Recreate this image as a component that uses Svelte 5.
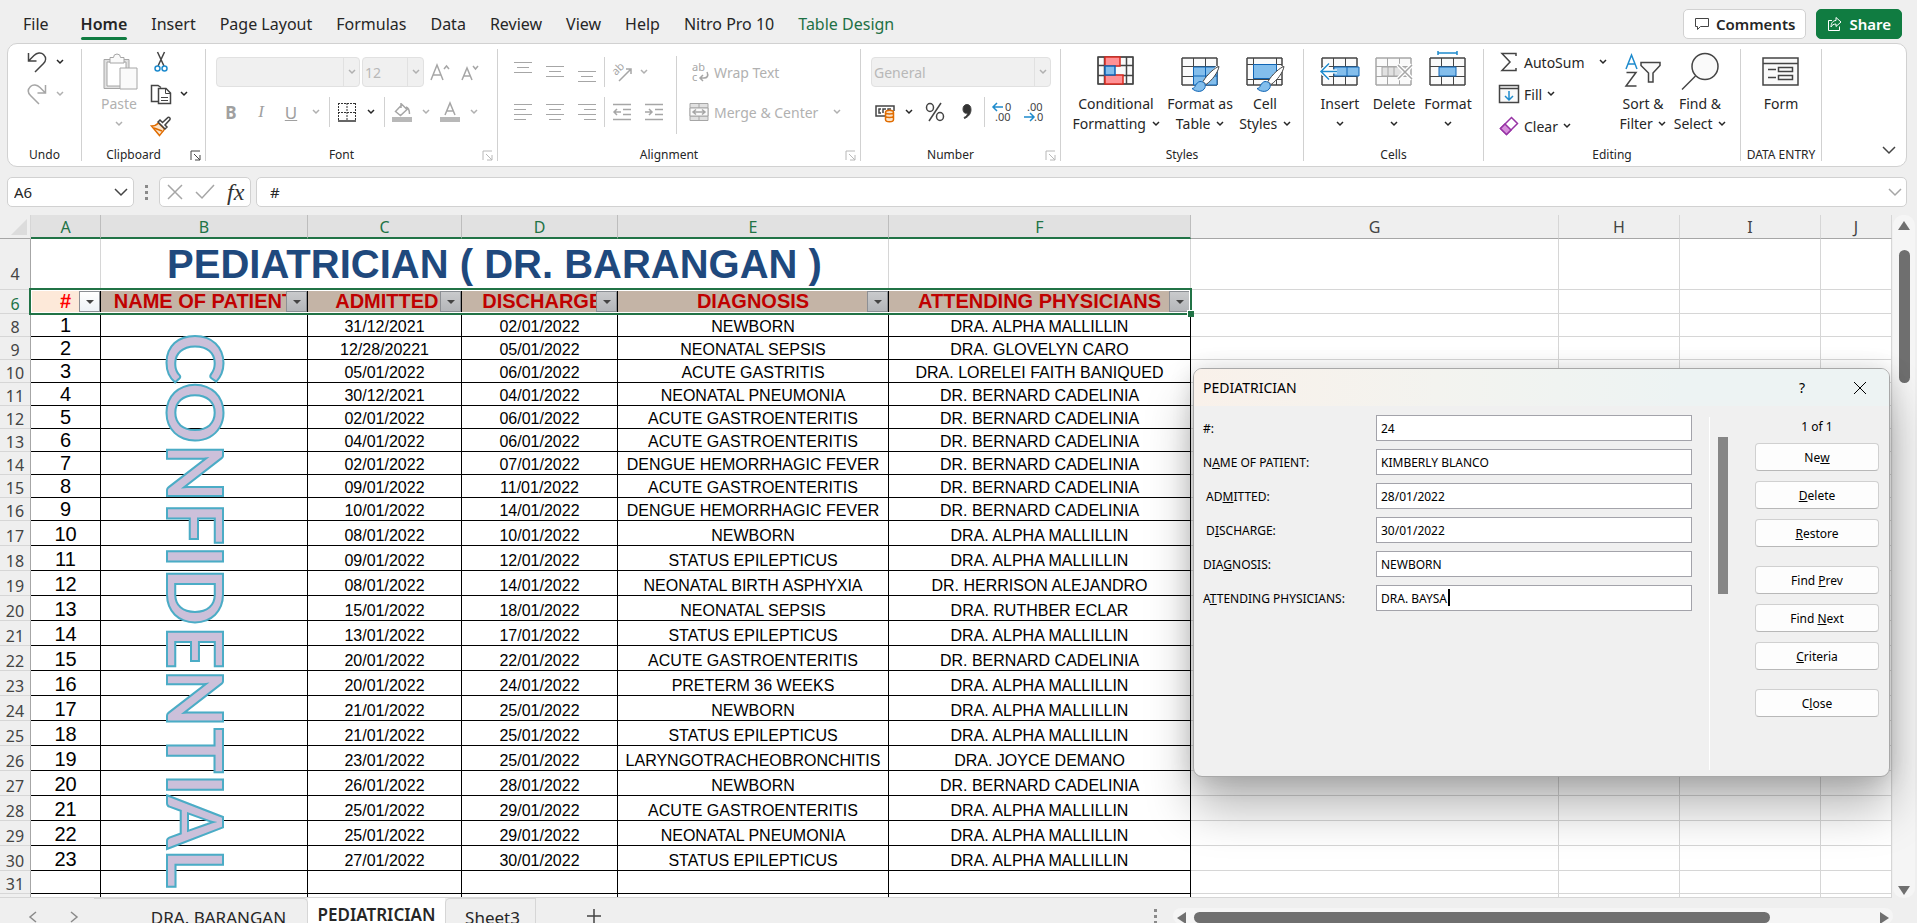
<script>
    const tabs = ['File', 'Home', 'Insert', 'Page Layout', 'Formulas', 'Data', 'Review', 'View', 'Help', 'Nitro Pro 10', 'Table Design']
    let activeTab = $state('Home')

    const columns = ['A', 'B', 'C', 'D', 'E', 'F', 'G', 'H', 'I', 'J']
    const headings = ['#', 'NAME OF PATIENT', ' ADMITTED', ' DISCHARGE', 'DIAGNOSIS', 'ATTENDING PHYSICIANS']

    const patients = [
        ['31/12/2021', '02/01/2022', 'NEWBORN', 'DRA. ALPHA MALLILLIN'],
        ['12/28/20221', '05/01/2022', 'NEONATAL SEPSIS', 'DRA. GLOVELYN CARO'],
        ['05/01/2022', '06/01/2022', 'ACUTE GASTRITIS', 'DRA. LORELEI FAITH BANIQUED'],
        ['30/12/2021', '04/01/2022', 'NEONATAL PNEUMONIA', 'DR. BERNARD CADELINIA'],
        ['02/01/2022', '06/01/2022', 'ACUTE GASTROENTERITIS', 'DR. BERNARD CADELINIA'],
        ['04/01/2022', '06/01/2022', 'ACUTE GASTROENTERITIS', 'DR. BERNARD CADELINIA'],
        ['02/01/2022', '07/01/2022', 'DENGUE HEMORRHAGIC FEVER', 'DR. BERNARD CADELINIA'],
        ['09/01/2022', '11/01/2022', 'ACUTE GASTROENTERITIS', 'DR. BERNARD CADELINIA'],
        ['10/01/2022', '14/01/2022', 'DENGUE HEMORRHAGIC FEVER', 'DR. BERNARD CADELINIA'],
        ['08/01/2022', '10/01/2022', 'NEWBORN', 'DRA. ALPHA MALLILLIN'],
        ['09/01/2022', '12/01/2022', 'STATUS EPILEPTICUS', 'DRA. ALPHA MALLILLIN'],
        ['08/01/2022', '14/01/2022', 'NEONATAL BIRTH ASPHYXIA', 'DR. HERRISON ALEJANDRO'],
        ['15/01/2022', '18/01/2022', 'NEONATAL SEPSIS', 'DRA. RUTHBER ECLAR'],
        ['13/01/2022', '17/01/2022', 'STATUS EPILEPTICUS', 'DRA. ALPHA MALLILLIN'],
        ['20/01/2022', '22/01/2022', 'ACUTE GASTROENTERITIS', 'DR. BERNARD CADELINIA'],
        ['20/01/2022', '24/01/2022', 'PRETERM 36 WEEKS', 'DRA. ALPHA MALLILLIN'],
        ['21/01/2022', '25/01/2022', 'NEWBORN', 'DRA. ALPHA MALLILLIN'],
        ['21/01/2022', '25/01/2022', 'STATUS EPILEPTICUS', 'DRA. ALPHA MALLILLIN'],
        ['23/01/2022', '25/01/2022', 'LARYNGOTRACHEOBRONCHITIS', 'DRA. JOYCE DEMANO'],
        ['26/01/2022', '28/01/2022', 'NEWBORN', 'DR. BERNARD CADELINIA'],
        ['25/01/2022', '29/01/2022', 'ACUTE GASTROENTERITIS', 'DRA. ALPHA MALLILLIN'],
        ['25/01/2022', '29/01/2022', 'NEONATAL PNEUMONIA', 'DRA. ALPHA MALLILLIN'],
        ['27/01/2022', '30/01/2022', 'STATUS EPILEPTICUS', 'DRA. ALPHA MALLILLIN'],
    ]

    // label is split around its access key
    let fields = $state([
        { id: 'num', label: ['#:', '', ''], value: '24' },
        { id: 'name', label: ['N', 'A', 'ME OF PATIENT:'], value: 'KIMBERLY BLANCO' },
        { id: 'admitted', label: [' AD', 'M', 'ITTED:'], value: '28/01/2022' },
        { id: 'discharge', label: [' D', 'I', 'SCHARGE:'], value: '30/01/2022' },
        { id: 'diagnosis', label: ['DIA', 'G', 'NOSIS:'], value: 'NEWBORN' },
        { id: 'physician', label: ['A', 'T', 'TENDING PHYSICIANS:'], value: 'DRA. BAYSA' },
    ])

    const actions = [
        [['Ne', 'w', ''], ['', 'D', 'elete'], ['', 'R', 'estore']],
        [['Find ', 'P', 'rev'], ['Find ', 'N', 'ext'], ['', 'C', 'riteria']],
        [['C', 'l', 'ose']],
    ]
</script>

{#snippet chevron()}
    <svg class="chev" width="8" height="6" viewBox="0 0 8 6"><path d="M1 1l3 3 3-3" /></svg>
{/snippet}

{#snippet launcher(off)}
    <button class="launcher" class:off aria-label="More options">
        <svg width="11" height="11" viewBox="0 0 11 11"><path d="M1 10V1h9M4 4l6 6M10 5v5H5" /></svg>
    </button>
{/snippet}

{#snippet lines(rows, y, step)}
    <svg width="20" height="20" viewBox="0 0 20 20">
        {#each rows as [x, w], i}
            <path d="M{x} {y + i * step + 0.5}h{w}" />
        {/each}
    </svg>
{/snippet}

{#snippet cellGrid()}
    <path class="cellbg" d="M2 7h35v27H2z" />
    <path d="M2 7h35v27H2zM2 15.500h35M2 25.500h35M13.500 7v27M25.500 7v27" />
{/snippet}

{#snippet brush()}
    <path class="halo" d="M38 16L24 32L14 38" />
    <path class="white" d="M39 15.500c-4 1-12 8-16 15l3 3c6-4 12-12 13-18z" />
    <path class="sky" d="M12 37.500c4 0 3-6 8-7c4 0 6 3 5 6c-2 5-9 5-13 1z" />
{/snippet}

<div class="app">
    <header class="tabbar">
        <nav>
            {#each tabs as tab}
                <button class="tab" class:active={tab === activeTab} class:context={tab === 'Table Design'} onclick={() => activeTab = tab}>{tab}</button>
            {/each}
        </nav>
        <button class="comments">
            <svg width="16" height="16" viewBox="0 0 16 16"><path d="M1.500 2.500h13v8h-8l-3 3v-3h-2z" /></svg>
            Comments
        </button>
        <button class="share">
            <svg width="16" height="16" viewBox="0 0 16 16"><path d="M5 4.500H1.500v10h11v-4M9 1.500l5 4.500-5 4.500V8C6.500 8 5 9 4 11c0-4 2-6.500 5-6.500z" /></svg>
            Share
        </button>
    </header>

    <section class="ribbon">
        <div class="group undo">
            <div class="body stack">
                <div class="row">
                    <button aria-label="Undo"><svg width="22" height="22" viewBox="0 0 22 22"><path class="thick" d="M2.500 2v8h8M2.500 10L8 4.500C11 1.500 15 1 17.500 3.500c3 3 2.500 6.500 0 9L9 21" /></svg></button>
                    <button class="drop" aria-label="Undo list">{@render chevron()}</button>
                </div>
                <div class="row off">
                    <button aria-label="Redo"><svg width="22" height="22" viewBox="0 0 22 22"><path class="thick" d="M19.500 2v8h-8M19.500 10L14 4.500C11 1.500 7 1 4.500 3.500c-3 3-2.500 6.500 0 9L13 21" /></svg></button>
                    <button class="drop" aria-label="Redo list">{@render chevron()}</button>
                </div>
            </div>
            <div class="caption">Undo</div>
        </div>

        <div class="group clipboard">
            <div class="body">
                <button class="big off">
                    <svg width="40" height="42" viewBox="0 0 40 42">
                        <path class="pad" d="M5 8.500h25v29H5z" />
                        <path class="white" d="M8 11h19v24H8z" />
                        <path class="cellbg" d="M11 12V6.500h3.500a3.500 3.500 0 017 0H25V12z" />
                        <path class="cellbg" d="M21 17h17v21H21z" />
                    </svg>
                    <span>Paste</span>
                    {@render chevron()}
                </button>
                <div class="stack">
                    <div class="row">
                        <button aria-label="Cut"><svg width="22" height="22" viewBox="0 0 22 22"><path class="thick" d="M7.500 1l6.500 14M14.500 1L8 15" /><circle class="blue thick" cx="7.500" cy="17.500" r="2.500" /><circle class="blue thick" cx="14.500" cy="17.500" r="2.500" /></svg></button>
                    </div>
                    <div class="row">
                        <button aria-label="Copy"><svg width="22" height="22" viewBox="0 0 22 22"><path class="thick" d="M8 18.500H1.500v-16H8l3 2" /><path class="white thick" d="M8.500 5.500H16l4.500 4.500v10.500h-12z" /><path d="M15.500 5.500v5h5M11 14.500h7M11 17.500h7" /></svg></button>
                        <button class="drop" aria-label="Copy list">{@render chevron()}</button>
                    </div>
                    <div class="row">
                        <button aria-label="Format Painter"><svg width="22" height="22" viewBox="0 0 22 22"><path class="orange thick" d="M1.500 11c3 0 5-1 7-3l6 6c-1 2-3 4-5 6.500z" /><path class="orange thick" d="M4 13l8 3" /><path class="thick white" d="M8 7l2-2 2.500 2.500L18 2.500a1.500 1.500 0 012 2L15 10l2 2-2 2z" /></svg></button>
                    </div>
                </div>
            </div>
            <div class="caption">Clipboard</div>
            {@render launcher(false)}
        </div>

        <div class="group font off">
            <div class="body two">
                <div class="row">
                    <div class="combo fontname"><select disabled aria-label="Font"><option></option></select><i>{@render chevron()}</i></div>
                    <div class="combo fontsize"><select disabled aria-label="Font size"><option>12</option></select><i>{@render chevron()}</i></div>
                    <button class="tool" aria-label="Increase font size"><svg width="22" height="20" viewBox="0 0 22 20"><path class="thick" d="M2 18L8 3l6 15M4 13h8" /><path class="thick" d="M15 7l2.500-3L20 7" /></svg></button>
                    <button class="tool" aria-label="Decrease font size"><svg width="22" height="20" viewBox="0 0 22 20"><path class="thick" d="M3 18L8 6l5 12M5 14h6" /><path class="thick" d="M14 4l2.500 3L19 4" /></svg></button>
                </div>
                <div class="row">
                    <button class="tool letter"><b>B</b></button>
                    <button class="tool letter"><em>I</em></button>
                    <button class="tool letter"><u>U</u></button>
                    <button class="drop" aria-label="Underline list">{@render chevron()}</button>
                    <span class="rule"></span>
                    <button class="tool on" aria-label="Borders"><svg width="20" height="20" viewBox="0 0 20 20"><path class="dots" d="M1 1.500h18M1 10.500h18M1.500 1v17M10 1v17M18.500 1v17" /><path class="thick" d="M1 19h18" /></svg></button>
                    <button class="drop on" aria-label="Borders list">{@render chevron()}</button>
                    <span class="rule"></span>
                    <button class="tool" aria-label="Fill color"><svg width="20" height="20" viewBox="0 0 20 20"><path class="thick" d="M9 1v5M3.500 9.500L10 2.500l5 5-6.500 6zM14 5c3 1 3.500 4 3.500 7" /><path class="bar" d="M0 15h20v5H0z" /></svg></button>
                    <button class="drop" aria-label="Fill color list">{@render chevron()}</button>
                    <button class="tool" aria-label="Font color"><svg width="20" height="20" viewBox="0 0 20 20"><path class="thick" d="M5 13L10 1l5 12M7 9h6" /><path class="bar" d="M0 15h20v5H0z" /></svg></button>
                    <button class="drop" aria-label="Font color list">{@render chevron()}</button>
                </div>
            </div>
            <div class="caption">Font</div>
            {@render launcher(true)}
        </div>

        <div class="group alignment off">
            <div class="body">
                <div class="two left">
                    <div class="row">
                        <button class="tool" aria-label="Top align">{@render lines([[1, 18], [4, 12], [1, 18]], 0, 5)}</button>
                        <button class="tool" aria-label="Middle align">{@render lines([[1, 18], [4, 12], [1, 18]], 4, 5)}</button>
                        <button class="tool" aria-label="Bottom align">{@render lines([[1, 18], [4, 12], [1, 18]], 9, 5)}</button>
                        <span class="rule"></span>
                        <button class="tool" aria-label="Orientation"><svg width="20" height="20" viewBox="0 0 20 20"><path class="thick" d="M7 19L19 7M14 7h5v5" /><text transform="translate(4 14) rotate(-45)">ab</text></svg></button>
                        <button class="drop slim" aria-label="Orientation list">{@render chevron()}</button>
                    </div>
                    <div class="row">
                        <button class="tool" aria-label="Align left">{@render lines([[1, 18], [1, 12], [1, 18], [1, 12]], 2, 5)}</button>
                        <button class="tool" aria-label="Center">{@render lines([[1, 18], [4, 12], [1, 18], [4, 12]], 2, 5)}</button>
                        <button class="tool" aria-label="Align right">{@render lines([[1, 18], [7, 12], [1, 18], [7, 12]], 2, 5)}</button>
                        <span class="rule"></span>
                        <button class="tool" aria-label="Decrease indent"><svg width="20" height="20" viewBox="0 0 20 20"><path class="thick" d="M1 2.500h18M11 7.500h8M11 12.500h8M1 17.500h18M9 10H2M5 7l-3 3 3 3" /></svg></button>
                        <button class="tool" aria-label="Increase indent"><svg width="20" height="20" viewBox="0 0 20 20"><path class="thick" d="M1 2.500h18M11 7.500h8M11 12.500h8M1 17.500h18M1 10h7M5 7l3 3-3 3" /></svg></button>
                    </div>
                </div>
                <span class="rule tall"></span>
                <div class="two right">
                    <button class="row wide">
                        <svg width="20" height="20" viewBox="0 0 20 20"><text x="3" y="9">ab</text><text x="3" y="19">c</text><path class="thick" d="M18 10c2 4 0 6-3 6h-4M14 13l-3 3 3 3" /></svg>
                        Wrap Text
                    </button>
                    <button class="row wide">
                        <svg width="20" height="20" viewBox="0 0 20 20"><path class="pad" d="M1 1.500h18v17H1zM1 6h18M1 14h18M10 1v5M10 14v5" /><path class="cellbg" d="M1 6h18v8H1z" /><path class="thick" d="M4 10h12M7 7.500L4 10l3 2.500M13 7.500l3 2.500-3 2.500" /></svg>
                        Merge &amp; Center
                        <span class="drop">{@render chevron()}</span>
                    </button>
                </div>
            </div>
            <div class="caption">Alignment</div>
            {@render launcher(true)}
        </div>

        <div class="group number">
            <div class="body two">
                <div class="row off">
                    <div class="combo format"><select disabled aria-label="Number format"><option>General</option></select><i>{@render chevron()}</i></div>
                </div>
                <div class="row">
                    <button class="tool money" aria-label="Accounting format"><svg width="20" height="20" viewBox="0 0 20 20"><path class="thick" d="M10 14H1V4h18v5M6 7H4v4h2M8 11V7h3M13 9V7h3" /><path class="orange thick" d="M10.500 10.500v7c0 3 8 3 8 0v-7c0-3-8-3-8 0zc0 2 8 2 8 0M10.500 14c0 2 8 2 8 0" /></svg></button>
                    <button class="drop" aria-label="Accounting list">{@render chevron()}</button>
                    <button class="tool" aria-label="Percent"><svg width="20" height="20" viewBox="0 0 20 20"><path class="thick" d="M16 1L4 19" /><ellipse class="thick" cx="5" cy="5.500" rx="3.500" ry="4" /><ellipse class="thick" cx="15" cy="14.500" rx="3.500" ry="4" /></svg></button>
                    <button class="tool" aria-label="Comma style"><svg width="20" height="20" viewBox="0 0 20 20"><path class="ink" d="M10 2.500c2.500 0 4 2 4 5 0 4-2 7-6.500 9l-.500-1c2-1 3.500-2.500 3.500-4.500-2.500 1-4.500-.500-4.500-4 0-2.500 1.500-4.500 4-4.500z" /></svg></button>
                    <span class="rule"></span>
                    <button class="tool" aria-label="Increase decimal"><svg width="22" height="20" viewBox="0 0 22 20"><path class="blue thick" d="M12 5H2M6 1L2 5l4 4" /><text x="14" y="9">0</text><text x="4" y="19">.00</text></svg></button>
                    <button class="tool" aria-label="Decrease decimal"><svg width="22" height="20" viewBox="0 0 22 20"><path class="blue thick" d="M1 15h10M7 11l4 4-4 4" /><text x="4" y="9">.00</text><text x="11" y="19">.0</text></svg></button>
                </div>
            </div>
            <div class="caption">Number</div>
            {@render launcher(true)}
        </div>

        <div class="group styles">
            <div class="body">
                <button class="big cond">
                    <svg width="40" height="42" viewBox="0 0 40 42">
                        <path class="cellbg" d="M2 6h35v27H2z" />
                        <path class="thick" d="M2 6h35v27H2zM2 14.500h35M2 24.500h35M8.500 6v27M30.500 6v27" />
                        <path class="red thick" d="M9 6h15v9H9zM9 24h18v9H9z" />
                        <path class="sky thick" d="M9 15h10v9H9z" />
                    </svg>
                    <span>Conditional<br>Formatting {@render chevron()}</span>
                </button>
                <button class="big fmt">
                    <svg width="40" height="42" viewBox="0 0 40 42">
                        {@render cellGrid()}
                        <path class="sky" d="M13.500 16H37v18H13.500zM13.500 25H37M25.500 16v18" />
                        {@render brush()}
                    </svg>
                    <span>Format as<br>Table {@render chevron()}</span>
                </button>
                <button class="big cell">
                    <svg width="40" height="42" viewBox="0 0 40 42">
                        <path class="cellbg" d="M2 7h35v27H2z" />
                        <path d="M2 7h35v27H2zM2 13.500h35M2 28.500h35M8.500 7v27M31.500 7v27" />
                        <path class="sky" d="M8.500 13.500h23v14h-23z" />
                        {@render brush()}
                    </svg>
                    <span>Cell<br>Styles {@render chevron()}</span>
                </button>
            </div>
            <div class="caption">Styles</div>
        </div>

        <div class="group cells">
            <div class="body">
                <button class="big">
                    <svg width="40" height="42" viewBox="0 0 40 42">
                        {@render cellGrid()}
                        <path class="sky" d="M14 16h25v9H14zM27 16v9" />
                        <path class="halo" d="M17 20.500H1M9 12.500l-8 8 8 8" />
                        <path class="blue thick" d="M17 20.500H1M9 12.500l-8 8 8 8" />
                    </svg>
                    <span>Insert</span>
                    {@render chevron()}
                </button>
                <button class="big del">
                    <svg width="40" height="42" viewBox="0 0 40 42">
                        {@render cellGrid()}
                        <path class="pad" d="M8 16h24v9H8zM14 16v9M20 16v9" />
                        <path class="halo" d="M24 14l14 14M38 14L24 28" />
                        <path class="thick" d="M24 14l14 14M38 14L24 28" />
                    </svg>
                    <span>Delete</span>
                    {@render chevron()}
                </button>
                <button class="big">
                    <svg width="40" height="42" viewBox="0 0 40 42">
                        {@render cellGrid()}
                        <path class="sky" d="M11 16h17v9H11z" />
                        <path class="blue thick" d="M10 2h19M10 0v4M29 0v4" />
                    </svg>
                    <span>Format</span>
                    {@render chevron()}
                </button>
            </div>
            <div class="caption">Cells</div>
        </div>

        <div class="group editing">
            <div class="body">
                <div class="stack">
                    <button class="row">
                        <svg width="20" height="20" viewBox="0 0 20 20"><path class="thick" d="M17 4V1.500H3l8 8.500-8 8.500h14V16" /></svg>
                        <span class="sum">AutoSum</span>{@render chevron()}
                    </button>
                    <button class="row">
                        <svg width="20" height="20" viewBox="0 0 20 20"><path class="cellbg thick" d="M.500 1.500h19v17H.500zM.500 4.500h19" /><path class="blue thick" d="M10 7v9M6 12l4 4 4-4" /></svg>
                        Fill {@render chevron()}
                    </button>
                    <button class="row">
                        <svg width="20" height="20" viewBox="0 0 20 20"><path class="plum thick" d="M12.500 1.500l6 6L7.500 18.500l-6-6z" /><path class="plum fill thick" d="M6 8l6 6-4.500 4.500-6-6z" /></svg>
                        Clear {@render chevron()}
                    </button>
                </div>
                <button class="big sort">
                    <svg width="40" height="42" viewBox="0 0 40 42">
                        <path class="blue thick" d="M3 18L8.500 4 14 18M5 13h7" />
                        <path class="thick" d="M3.500 21.500H13L3 35h10.500" />
                        <path class="cellbg thick" d="M18 11.500h19v3l-7 7.500v9h-4.500v-9L18 14.500z" />
                    </svg>
                    <span>Sort &amp;<br>Filter {@render chevron()}</span>
                </button>
                <button class="big find">
                    <svg width="40" height="42" viewBox="0 0 40 42"><circle class="cellbg thick" cx="25" cy="15.500" r="13" /><path class="thick" d="M15.500 25L2 38.500" /></svg>
                    <span>Find &amp;<br>Select {@render chevron()}</span>
                </button>
            </div>
            <div class="caption">Editing</div>
        </div>

        <div class="group entry">
            <div class="body">
                <button class="big">
                    <svg width="40" height="42" viewBox="0 0 40 42"><path class="cellbg thick" d="M2 7h35v27H2z" /><path class="thick" d="M2 12.500h35M7 18.500h8M7 26.500h8M17.500 16.500h14v4h-14zM17.500 24.500h14v4h-14z" /></svg>
                    <span>Form</span>
                </button>
            </div>
            <div class="caption">DATA ENTRY</div>
        </div>

        <button class="collapse" aria-label="Collapse ribbon"><svg width="14" height="9" viewBox="0 0 14 9"><path class="thick" d="M1 1l6 6 6-6" /></svg></button>
    </section>

    <section class="formulabar">
        <div class="box namebox">
            <input aria-label="Name box" value="A6">
            <button aria-label="Names"><svg width="14" height="9" viewBox="0 0 14 9"><path class="thick" d="M1 1l6 6 6-6" /></svg></button>
        </div>
        <div class="grip"><i></i><i></i><i></i></div>
        <div class="box tools">
            <button class="off" aria-label="Cancel"><svg width="16" height="16" viewBox="0 0 16 16"><path class="thick" d="M1 1l14 14M15 1L1 15" /></svg></button>
            <button class="off" aria-label="Enter"><svg width="20" height="16" viewBox="0 0 20 16"><path class="thick" d="M1 8l6 6L19 1" /></svg></button>
            <button class="fx">fx</button>
        </div>
        <div class="box formula off">
            <input aria-label="Formula" value="#">
            <button aria-label="Expand"><svg width="14" height="9" viewBox="0 0 14 9"><path class="thick" d="M1 1l6 6 6-6" /></svg></button>
        </div>
    </section>

    <main class="workspace">
        <div class="sheet">
            <table>
                <colgroup>
                    <col class="rh"><col class="a"><col class="b"><col class="c"><col class="d"><col class="e"><col class="f"><col class="g"><col class="h"><col class="i"><col>
                </colgroup>
                <thead>
                    <tr>
                        <th class="corner"><svg width="16" height="16" viewBox="0 0 16 16"><path d="M16 0v16H0z" /></svg></th>
                        {#each columns as column, i}
                            <th class:picked={i < 6}>{column}</th>
                        {/each}
                    </tr>
                </thead>
                <tbody>
                    <tr class="titlerow">
                        <th>4</th>
                        <td></td>
                        <td colspan="4" class="title">PEDIATRICIAN ( DR. BARANGAN )</td>
                        <td></td><td></td><td></td><td></td><td></td>
                    </tr>
                    <tr class="headrow">
                        <th class="picked">6</th>
                        {#each headings as heading}
                            <td class="heading"><div>{heading}<button aria-label="Filter {heading}"></button></div></td>
                        {/each}
                        <td></td><td></td><td></td><td></td>
                    </tr>
                    {#each patients as patient, i}
                        <tr class:taller={i > 8}>
                            <th>{i + 8}</th>
                            <td class="data no">{i + 1}</td>
                            <td class="data"></td>
                            {#each patient as value}
                                <td class="data">{value}</td>
                            {/each}
                            <td></td><td></td><td></td><td></td>
                        </tr>
                    {/each}
                    <tr>
                        <th>31</th>
                        {#each columns as column, i}
                            <td class:data={i < 6}></td>
                        {/each}
                    </tr>
                    <tr>
                        <th></th>
                        {#each columns as column, i}
                            <td class:data={i < 6}></td>
                        {/each}
                    </tr>
                </tbody>
            </table>
            <div class="wordart">CONFIDENTIAL</div>
            <div class="selection"></div>
        </div>
        <div class="vscroll"><i class="up"></i><b></b><i class="down"></i></div>
    </main>

    <footer class="sheetbar">
        <button class="nav" aria-label="Previous sheet"><svg width="8" height="12" viewBox="0 0 8 12"><path class="thick" d="M7 1L1 6l6 5" /></svg></button>
        <button class="nav" aria-label="Next sheet"><svg width="8" height="12" viewBox="0 0 8 12"><path class="thick" d="M1 1l6 5-6 5" /></svg></button>
        <button class="sheettab first">DRA. BARANGAN</button>
        <button class="sheettab current">PEDIATRICIAN</button>
        <button class="sheettab last">Sheet3</button>
        <button class="add" aria-label="New sheet"><svg width="16" height="16" viewBox="0 0 16 16"><path class="thick" d="M8 1v14M1 8h14" /></svg></button>
        <div class="grip"><i></i><i></i><i></i></div>
        <div class="hscroll"><i class="prev"></i><span><b></b></span><i class="next"></i></div>
    </footer>

    <div class="dialog" role="dialog" aria-label="PEDIATRICIAN">
        <div class="titlebar">
            <span>PEDIATRICIAN</span>
            <button>?</button>
            <button aria-label="Close"><svg width="14" height="14" viewBox="0 0 14 14"><path d="M1 1l12 12M13 1L1 13" /></svg></button>
        </div>
        <div class="content">
            <form>
                {#each fields as field}
                    <label for={field.id}>{field.label[0]}<u>{field.label[1]}</u>{field.label[2]}</label>
                    <div class="entrybox" class:caret={field.id === 'physician'}>
                        <input id={field.id} bind:value={field.value}>
                    </div>
                {/each}
            </form>
            <div class="records"><b></b></div>
            <div class="actions">
                <p>1 of 1</p>
                {#each actions as set}
                    <div class="set">
                        {#each set as [before, key, after]}
                            <button>{before}<u>{key}</u>{after}</button>
                        {/each}
                    </div>
                {/each}
            </div>
        </div>
    </div>
</div>

<style>
    :global(body) {
        overflow: hidden;
        background: #efefef;
    }

    .app {
        position: relative;
        display: flex;
        flex-direction: column;
        height: 100vh;
        overflow: hidden;
        font-family: "Noto Sans", "Open Sans", sans-serif;
        font-size: 14px;
        color: #262626;
        background: #efefef;
    }

    .app * {
        box-sizing: border-box;
    }

    button, input, select {
        margin: 0;
        padding: 0;
        border: 0;
        background: none;
        color: inherit;
        font: inherit;
        outline: none;
    }

    button {
        display: flex;
        align-items: center;
        justify-content: center;
        white-space: nowrap;
    }

    /* icons */
    svg {
        flex: none;
        overflow: visible;
        fill: none;
        stroke: #444;
        stroke-width: 1;
    }
    svg text {
        fill: #444;
        stroke: none;
        font-size: 11px;
    }
    .chev {
        stroke: #262626;
        stroke-width: 1.500;
    }
    .thick { stroke-width: 1.500; }
    .white { fill: #fff; }
    .cellbg { fill: #fafafa; }
    .pad { fill: #e1e1e1; }
    .ink { fill: #333; }
    .blue { stroke: #1e8bcd; }
    .orange { stroke: #e06c00; fill: #fbe3c8; }
    .red { stroke: #d92b20; fill: #ff9195; }
    .sky { stroke: #0f64b4; fill: #83beec; }
    .plum { stroke: #9733a5; fill: #fff; }
    .plum.fill { fill: #d78fdc; }
    .halo { stroke: #fff; stroke-width: 4; }
    .dots { stroke-dasharray: 2 1; }
    .off svg, .del svg:first-child { stroke: #a6a6a6; }
    .off .chev { stroke: #b0b0b0; }
    .off svg text { fill: #a6a6a6; }
    .bar { fill: #b8b8b8; stroke: none; }
    .on svg { stroke: #333; }

    /* tabs */
    .tabbar {
        display: flex;
        flex: none;
        align-items: center;
        height: 43px;
        padding: 4px 15px 0 7px;
        font-size: 16px;
    }
    nav {
        display: flex;
        flex: 1;
    }
    .tab {
        position: relative;
        height: 32px;
        margin: 0 4px;
        padding: 0 8px;
    }
    .tab:first-child {
        margin: 0 12px 0 8px;
    }
    .tab.active {
        font-weight: 600;
    }
    .tab.active::after {
        content: "";
        position: absolute;
        left: 8px;
        right: 8px;
        bottom: 0;
        height: 3px;
        border-radius: 2px;
        background: #107c41;
    }
    .tab.context {
        color: #1e7145;
    }
    .comments, .share {
        gap: 6px;
        height: 30px;
        padding: 0 10px;
        border: 1px solid #d1d1d1;
        border-radius: 5px;
        background: #fff;
        font-size: 15px;
        font-weight: 600;
    }
    .share {
        margin-left: 10px;
        border-color: #107c41;
        background: #107c41;
        color: #fff;
    }
    .share svg { stroke: #fff; }

    /* ribbon */
    .ribbon {
        display: flex;
        flex: none;
        margin: 0 10px 0 7px;
        padding: 5px 0;
        height: 124px;
        border: 1px solid #d1d1d1;
        border-radius: 10px;
        background: #fff;
    }
    .group {
        position: relative;
        display: flex;
        flex: none;
        flex-direction: column;
        border-right: 1px solid #d1d1d1;
    }
    .undo { width: 74px; }
    .clipboard { width: 124px; }
    .font { width: 292px; }
    .alignment { width: 363px; }
    .number { width: 200px; }
    .styles { width: 243px; }
    .cells { width: 180px; }
    .editing { width: 257px; }
    .entry { width: 81px; }

    .body {
        display: flex;
        flex: 1;
    }
    .caption {
        line-height: 12px;
        font-size: 12px;
        text-align: center;
        white-space: nowrap;
    }
    .clipboard .caption, .font .caption, .alignment .caption, .number .caption {
        padding-right: 20px;
    }
    .launcher {
        position: absolute;
        right: 4px;
        bottom: 0;
    }
    .launcher.off svg { stroke: #b8b8b8; }
    .stack {
        display: flex;
        flex-direction: column;
        gap: 6px;
    }
    .stack .row {
        height: 26px;
    }
    .row {
        display: flex;
        align-items: center;
        justify-content: flex-start;
    }
    .two {
        display: flex;
        flex-direction: column;
        gap: 10px;
        padding: 8px 0 0 10px;
    }
    .two .row {
        height: 30px;
    }
    .undo .body {
        padding-left: 18px;
    }
    .clipboard .body {
        padding-left: 14px;
        gap: 8px;
    }
    .drop {
        display: flex;
        align-items: center;
        justify-content: center;
        width: 20px;
        height: 30px;
    }
    .drop.slim { width: 12px; }
    .clipboard .drop, .undo .drop { margin-left: 2px; }
    .off .on .chev { stroke: #262626; }
    .off .on svg { stroke: #333; }

    .big {
        flex-direction: column;
        justify-content: flex-start;
        padding-top: 2px;
        line-height: 20px;
    }
    .big svg:first-child { margin-bottom: 1px; }
    .big > .chev { margin-top: 7px; }
    .big span .chev { margin-left: 2px; vertical-align: 2px; }
    .big.off { width: 46px; color: #b1b1b1; }
    .styles .body { padding-left: 5px; }
    .cond { width: 100px; }
    .fmt { width: 68px; }
    .cell { width: 62px; }
    .cells .body { padding-left: 9px; }
    .cells .big { width: 54px; }
    .editing .stack { width: 131px; padding-left: 15px; }
    .editing .row { gap: 5px; }
    .sum { width: 70px; text-align: left; }
    .sort { width: 56px; }
    .find { width: 58px; }
    .entry .big { width: 80px; }

    .tool {
        width: 32px;
        height: 30px;
    }
    .money { width: 28px; }
    .font .tool { width: 28px; }
    .font .row:first-child { gap: 2px; }
    .font .tool.letter { width: 30px; }
    .letter {
        font-size: 17px;
        color: #a0a0a0;
    }
    .letter em { font-family: "Liberation Serif", serif; }
    .rule {
        flex: none;
        width: 1px;
        height: 30px;
        margin: 0 1px;
        background: #d1d1d1;
    }
    .font .rule { margin: 0 3px; }
    .rule.tall {
        height: 78px;
        margin: 7px 0 0;
    }
    .left {
        width: 178px;
        padding-left: 9px;
    }
    .right { padding-left: 12px; }
    .wide {
        gap: 5px;
        color: #b1b1b1;
    }
    .wide .drop { margin-left: 4px; }
    .combo {
        display: flex;
        height: 30px;
        border: 1px solid #e1e1e1;
        border-radius: 4px;
        background: #f0f0f0;
    }
    .combo select {
        flex: 1;
        width: 0;
        padding-left: 2px;
        appearance: none;
        color: #b8b8b8;
        opacity: 1;
    }
    .combo i {
        display: flex;
        align-items: center;
        justify-content: center;
        width: 16px;
        border-left: 1px solid #e1e1e1;
    }
    .fontname { width: 144px; }
    .fontsize { width: 62px; }
    .format { width: 180px; }
    .collapse {
        align-self: flex-end;
        margin: 0 10px 6px auto;
    }

    /* formula bar */
    .formulabar {
        display: flex;
        flex: none;
        padding: 10px 10px 8px 7px;
        height: 48px;
    }
    .box {
        display: flex;
        align-items: center;
        height: 30px;
        border: 1px solid #d1d1d1;
        border-radius: 5px;
        background: #fff;
    }
    .box input {
        flex: 1;
        min-width: 0;
        padding-left: 6px;
        font-size: 15px;
        line-height: 20px;
    }
    .namebox {
        width: 127px;
        padding-right: 5px;
    }
    .grip {
        display: flex;
        flex-direction: column;
        justify-content: center;
        gap: 3px;
        width: 25px;
        align-items: center;
    }
    .grip i {
        width: 3px;
        height: 3px;
        background: #8a8a8a;
    }
    .tools {
        width: 92px;
        gap: 12px;
        padding-left: 7px;
    }
    .fx {
        font-family: "Liberation Serif", serif;
        font-size: 24px;
        font-style: italic;
        color: #333;
    }
    .formula {
        flex: 1;
        margin-left: 5px;
        padding: 0 4px 0 7px;
    }

    /* grid */
    .workspace {
        display: flex;
        flex: 1;
        min-height: 0;
    }
    .sheet {
        position: relative;
        flex: 1;
        overflow: hidden;
        border-bottom: 1px solid #d6d6d6;
        background: #fff;
    }
    table {
        width: 100%;
        table-layout: fixed;
        border-collapse: separate;
        border-spacing: 0;
    }
    .rh { width: 31px; }
    .a { width: 70px; }
    .b { width: 207px; }
    .c { width: 154px; }
    .d { width: 156px; }
    .e { width: 271px; }
    .f { width: 302px; }
    .g { width: 368px; }
    .h { width: 121px; }
    .i { width: 141px; }
    th, td {
        padding: 0;
        overflow: hidden;
        border-right: 1px solid #d6d6d6;
        border-bottom: 1px solid #d6d6d6;
        font-size: 16px;
        font-weight: normal;
        line-height: 18px;
        text-align: center;
        vertical-align: bottom;
        white-space: nowrap;
    }
    th {
        background: #efefef;
        color: #444;
    }
    thead th {
        height: 24px;
        padding-bottom: 2px;
        border-bottom-color: #a6a6a6;
    }
    thead th.picked {
        padding-bottom: 1px;
        border-right-color: #bdbdbd;
        border-bottom: 2px solid #217346;
        background: #e1e1e1;
    }
    th.picked { color: #217346; }
    .corner svg {
        display: block;
        margin: 0 0 1px 11px;
        fill: #dcdcdc;
        stroke: none;
    }
    tbody th { border-right-color: #a6a6a6; }
    td {
        font-family: "Liberation Sans", Arial, sans-serif;
        color: #000;
    }
    tbody tr { height: 23px; }
    tbody tr.taller { height: 25px; }
    tbody tr.titlerow { height: 51px; }
    tbody tr.headrow { height: 24px; }
    .titlerow th { padding-bottom: 6px; }
    .data {
        border-color: #000;
    }
    .no {
        font-size: 20px;
        line-height: 22px;
    }
    .title {
        color: #1f497d;
        font-size: 40px;
        font-weight: bold;
        line-height: 49px;
    }
    .heading {
        border-color: #000;
        background: #c4b4a6;
        color: #c00000;
        font-size: 20px;
        font-weight: bold;
        vertical-align: middle;
        white-space: pre;
    }
    .heading div { position: relative; line-height: 23px; }
    .heading button {
        position: absolute;
        right: 0;
        top: 1px;
        width: 21px;
        height: 21px;
        border: 1px solid #8c8f94;
        background: linear-gradient(#c9cacc, #b4b6b9);
    }
    .heading button::after {
        content: "";
        border: 4px solid transparent;
        border-top: 4px solid #444;
        border-bottom: 0;
    }
    .heading:nth-child(2) {
        background: #fde9d9;
        color: #f00;
    }
    .heading:nth-child(2) button { background: linear-gradient(#fff, #eef2f6); }
    .selection {
        position: absolute;
        left: 29px;
        top: 73px;
        width: 1163px;
        height: 27px;
        border: 2px solid #217346;
        box-shadow: inset 0 0 0 1px #fff;
    }
    .selection::after {
        content: "";
        position: absolute;
        right: -4px;
        bottom: -4px;
        width: 6px;
        height: 6px;
        border: 1px solid #fff;
        border-width: 1px 0 0 1px;
        background: #217346;
    }
    .wordart {
        position: absolute;
        left: 150px;
        top: 118px;
        writing-mode: vertical-rl;
        font-family: Lato, sans-serif;
        font-size: 76px;
        font-weight: bold;
        line-height: 92px;
        color: #ccc0da;
        -webkit-text-stroke: 2px #4bacc6;
    }

    /* scroll bars */
    .vscroll {
        display: flex;
        flex-direction: column;
        align-items: center;
        width: 22px;
        margin: 0 2px 0 1px;
        padding: 6px 0 3px;
        border-radius: 10px;
        background: #f5f5f5;
    }
    .vscroll b {
        width: 11px;
        height: 133px;
        margin: 20px 0 auto;
        border-radius: 6px;
        background: #6f6f6f;
    }
    .up, .down {
        border: 6px solid transparent;
        border-bottom: 9px solid #6f6f6f;
        border-top: 0;
    }
    .down {
        border-top: 9px solid #6f6f6f;
        border-bottom: 0;
    }

    .sheetbar {
        display: flex;
        flex: none;
        height: 25px;
        padding: 0 24px 0 12px;
        overflow: hidden;
        font-size: 17px;
    }
    .nav {
        width: 41px;
        height: 37px;
    }
    .nav svg { stroke: #8a8a8a; }
    .sheettab {
        height: 36px;
        border: 1px solid transparent;
    }
    .first {
        width: 214px;
        padding: 2px 0 0 36px;
        border: 1px solid #d6d6d6;
        border-width: 1px 1px 0 0;
        border-radius: 0 5px 0 0;
    }
    .current {
        width: 137px;
        padding-bottom: 4px;
        background: #fff;
        font-weight: 600;
    }
    .last {
        width: 91px;
        padding: 2px 0 0 4px;
        border: 1px solid #d6d6d6;
        border-width: 1px 1px 0 1px;
        border-radius: 5px 0 0 0;
    }
    .add {
        width: 116px;
        height: 36px;
    }
    .sheetbar .grip {
        height: 37px;
        margin-left: auto;
    }
    .hscroll {
        display: flex;
        align-items: center;
        width: 720px;
        height: 16px;
        margin: 10px 0 0 5px;
        padding: 3px 4px 0;
        border-radius: 8px;
        background: #f5f5f5;
    }
    .hscroll span {
        flex: 1;
        margin: 0 8px;
    }
    .hscroll b {
        display: block;
        width: 85%;
        height: 11px;
        border-radius: 6px;
        background: #6f6f6f;
    }
    .prev, .next {
        border: 6px solid transparent;
        border-right: 9px solid #6f6f6f;
        border-left: 0;
    }
    .next {
        border-left: 9px solid #6f6f6f;
        border-right: 0;
    }

    /* data form window */
    .dialog {
        position: absolute;
        right: 27px;
        top: 368px;
        width: 697px;
        height: 409px;
        overflow: hidden;
        border: 1px solid #a8a8a8;
        border-radius: 9px;
        background: #f0f0f0;
        color: #000;
        font-size: 12px;
        box-shadow: 0 32px 48px rgba(0, 0, 0, 0.28), 0 2px 24px rgba(0, 0, 0, 0.16);
    }
    .titlebar {
        display: flex;
        align-items: center;
        height: 37px;
        padding-left: 9px;
        background: linear-gradient(90deg, #f9f1ea, #f3f3ef 35%, #edf3f3 70%);
        font-size: 14px;
    }
    .titlebar span { flex: 1; }
    .titlebar button {
        width: 58px;
        height: 36px;
    }
    .titlebar svg { stroke: #000; }
    .content {
        display: flex;
        padding: 9px 0 0 9px;
    }
    form {
        display: grid;
        flex: 1;
        grid-template-columns: 173px 1fr;
        grid-auto-rows: 26px;
        gap: 8px 0;
        align-items: center;
    }
    label { white-space: pre; }
    .entrybox {
        position: relative;
        height: 26px;
    }
    .entrybox input {
        width: 100%;
        height: 26px;
        padding-left: 4px;
        border: 1px solid #a3a3aa;
        background: #fff;
    }
    .caret::after {
        content: "";
        position: absolute;
        left: 72px;
        top: 4px;
        width: 2px;
        height: 17px;
        background: #000;
    }
    .records {
        width: 18px;
        height: 353px;
        margin: 2px 28px 0 17px;
        padding: 20px 0 0 8px;
        border-left: 1px solid #fff;
    }
    .records b {
        display: block;
        width: 10px;
        height: 157px;
        background: #868686;
    }
    .actions {
        display: flex;
        flex-direction: column;
        gap: 19px;
        width: 134px;
        padding-right: 10px;
    }
    .actions p {
        margin: 3px 0 -12px;
        line-height: 18px;
        text-align: center;
    }
    .set {
        display: flex;
        flex-direction: column;
        gap: 10px;
    }
    .set button {
        height: 28px;
        border: 1px solid #d0d0d0;
        border-bottom-color: #b8b8b8;
        border-radius: 4px;
        background: #fdfdfd;
        white-space: pre;
    }
</style>
